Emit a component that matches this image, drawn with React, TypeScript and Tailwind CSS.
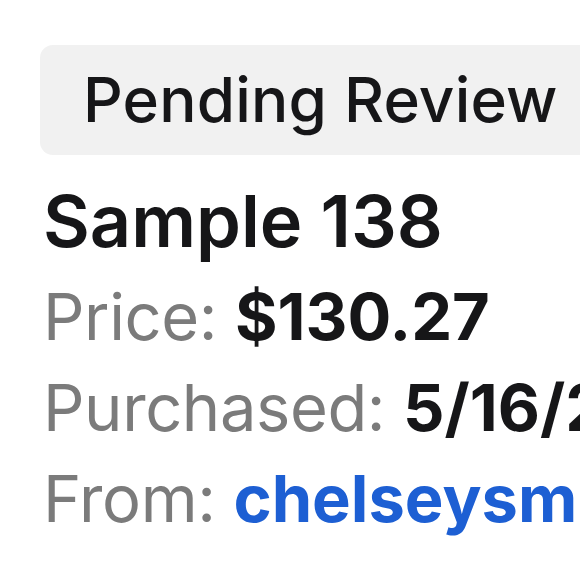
export default function App() {
  return (
    <div
      className="w-[580px] h-[580px] overflow-hidden bg-white pt-[45px] pl-[40px] text-[#161618]"
      style={{ fontFamily: 'Inter, "Noto Sans", sans-serif' }}
    >
      <div className="flex h-[110px] w-[620px] items-center rounded-[13px] bg-[#f1f1f1] pl-[43px]">
        <span className="whitespace-nowrap text-[62px] font-medium leading-none tracking-[0.2px]">
          Pending Review
        </span>
      </div>
      <div className="flex flex-col pl-[3px]">
        <div className="mt-[20px] whitespace-nowrap text-[72px] font-semibold leading-[92px]">
          Sample 138
        </div>
        <div className="mt-[4px] whitespace-nowrap text-[65px] leading-[91px]">
          <span className="text-[#7b7b7b] tracking-[-0.4px]">Price: </span>
          <span className="font-bold">$130.27</span>
        </div>
        <div className="whitespace-nowrap text-[65px] leading-[91px]">
          <span className="text-[#7b7b7b] tracking-[-0.4px]">Purchased: </span>
          <span className="font-bold">5/16/2024</span>
        </div>
        <div className="whitespace-nowrap text-[65px] leading-[91px]">
          <span className="text-[#7b7b7b] tracking-[-0.4px]">From: </span>
          <span className="font-bold text-[#1d5fd3]">chelseysmith</span>
        </div>
      </div>
    </div>
  );
}
